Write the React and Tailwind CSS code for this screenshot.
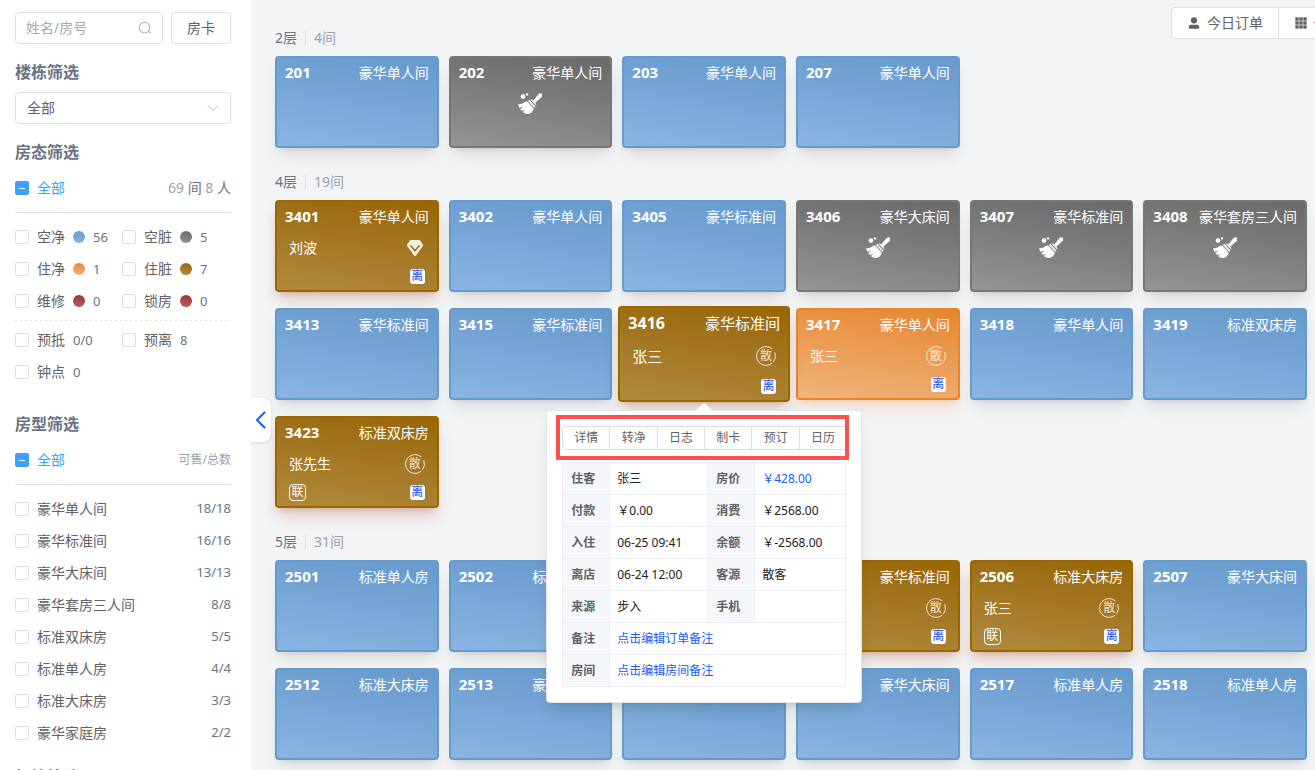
import React, { useState } from "react";
import clsx from "clsx";

const STATUS_FILTERS = [
  { label: "空净", count: "56", dot: "bg-linear-190 from-[#6699cc] to-[#8ab4e2]" },
  { label: "空脏", count: "5", dot: "bg-linear-190 from-[#696969] to-[#949494]" },
  { label: "住净", count: "1", dot: "bg-linear-190 from-[#e6862c] to-[#f0b47a]" },
  { label: "住脏", count: "7", dot: "bg-linear-190 from-[#996600] to-[#b08a3c]" },
  { label: "维修", count: "0", dot: "bg-linear-190 from-[#993333] to-[#b86060]" },
  { label: "锁房", count: "0", dot: "bg-linear-190 from-[#993333] to-[#b86060]" },
];

const ORDER_FILTERS = [
  { label: "预抵", count: "0/0" },
  { label: "预离", count: "8" },
  { label: "钟点", count: "0" },
];

const ROOM_TYPES = [
  ["豪华单人间", "18/18"],
  ["豪华标准间", "16/16"],
  ["豪华大床间", "13/13"],
  ["豪华套房三人间", "8/8"],
  ["标准双床房", "5/5"],
  ["标准单人房", "4/4"],
  ["标准大床房", "3/3"],
  ["豪华家庭房", "2/2"],
];

const FLOORS = [
  {
    name: "2层",
    total: "4间",
    rooms: [
      { no: "201", type: "豪华单人间", status: "clean" },
      { no: "202", type: "豪华单人间", status: "dirty" },
      { no: "203", type: "豪华单人间", status: "clean" },
      { no: "207", type: "豪华单人间", status: "clean" },
    ],
  },
  {
    name: "4层",
    total: "19间",
    rooms: [
      { no: "3401", type: "豪华单人间", status: "usedDirty", guest: "刘波", vip: true, leaving: true },
      { no: "3402", type: "豪华单人间", status: "clean" },
      { no: "3405", type: "豪华标准间", status: "clean" },
      { no: "3406", type: "豪华大床间", status: "dirty" },
      { no: "3407", type: "豪华标准间", status: "dirty" },
      { no: "3408", type: "豪华套房三人间", status: "dirty" },
      { no: "3413", type: "豪华标准间", status: "clean" },
      { no: "3415", type: "豪华标准间", status: "clean" },
      { no: "3416", type: "豪华标准间", status: "usedDirty", guest: "张三", leaving: true, active: true },
      { no: "3417", type: "豪华单人间", status: "used", guest: "张三", leaving: true },
      { no: "3418", type: "豪华单人间", status: "clean" },
      { no: "3419", type: "标准双床房", status: "clean" },
      { no: "3423", type: "标准双床房", status: "usedDirty", guest: "张先生", linked: true, leaving: true },
    ],
  },
  {
    name: "5层",
    total: "31间",
    rooms: [
      { no: "2501", type: "标准单人房", status: "clean" },
      { no: "2502", type: "标准单人房", status: "clean" },
      { no: "2503", type: "豪华标准间", status: "clean" },
      { no: "2505", type: "豪华标准间", status: "usedDirty", guest: "张三", leaving: true },
      { no: "2506", type: "标准大床房", status: "usedDirty", guest: "张三", linked: true, leaving: true },
      { no: "2507", type: "豪华大床间", status: "clean" },
      { no: "2512", type: "标准大床房", status: "clean" },
      { no: "2513", type: "豪华大床间", status: "clean" },
      { no: "2515", type: "豪华标准间", status: "clean" },
      { no: "2516", type: "豪华大床间", status: "clean" },
      { no: "2517", type: "标准单人房", status: "clean" },
      { no: "2518", type: "标准单人房", status: "clean" },
    ],
  },
];

const STATUS_STYLE = {
  clean: "border-[#6699cc] from-[#6699cc] to-[#8ab4e2] shadow-black/10",
  dirty: "border-[#777777] from-[#696969] to-[#949494] shadow-black/10",
  used: "border-[#e6862c] from-[#e6862c] to-[#f0b47a] shadow-[#e6862c]/25",
  usedDirty: "border-[#996600] from-[#996600] to-[#b08a3c] shadow-[#993300]/25",
};

const ACTIONS = ["详情", "转净", "日志", "制卡", "预订", "日历"];

const DETAILS = [
  ["住客", "张三", "房价", "￥428.00"],
  ["付款", "￥0.00", "消费", "￥2568.00"],
  ["入住", "06-25 09:41", "余额", "￥-2568.00"],
  ["离店", "06-24 12:00", "客源", "散客"],
  ["来源", "步入", "手机", ""],
];

function SearchIcon() {
  return (
    <svg className="w-3.5 h-3.5 shrink-0 text-[#a8abb2]" viewBox="0 0 1024 1024" fill="currentColor">
      <path d="m795.904 750.72 124.768 124.768a32 32 0 0 1-45.248 45.248L750.656 795.904a416 416 0 1 1 45.248-45.248zM480 832a352 352 0 1 0 0-704 352 352 0 0 0 0 704z" />
    </svg>
  );
}

function UserIcon() {
  return (
    <svg className="w-3.5 h-3.5 shrink-0" viewBox="0 0 1024 1024" fill="currentColor">
      <path d="M288 320a224 224 0 1 0 448 0 224 224 0 1 0-448 0zm544 608H160a32 32 0 0 1-32-32v-96a160 160 0 0 1 160-160h448a160 160 0 0 1 160 160v96a32 32 0 0 1-32 32z" />
    </svg>
  );
}

function GridIcon() {
  return (
    <svg className="w-3.5 h-3.5 shrink-0" viewBox="0 0 14 14" fill="currentColor">
      {[1, 5, 9].map((y) => [1, 5, 9].map((x) => <rect key={`${x}-${y}`} x={x + 0.3} y={y + 0.3} width="3.4" height="3.4" />))}
    </svg>
  );
}

function BroomIcon() {
  return (
    <svg className="w-6 h-6" viewBox="0 0 24 24" fill="white">
      <circle cx="5" cy="4.6" r="2.3" />
      <circle cx="9" cy="2.4" r="1.2" />
      <path d="M15.2 8.6 20.6 2.1C21.6 1 23 .9 23.9 1.8s.8 2.3-.3 3.3l-6.4 5.6z" />
      <path d="M11.2 7.8 17.4 14.6 16.3 15.8 10 8.9z" />
      <path d="M12.4 7.6 14 7.4 18.2 11.7 18.1 13.6z" />
      <path d="M9.3 9.6 15.6 16.5C15.4 19.2 13.2 21.8 10 21.9 8.2 22 6.3 21.1 4.9 19.9L7 17.9 3.6 18.8 2.3 17.2 5.2 14.9 1.3 15.8 0 12.2C2.5 12.5 4.6 11.8 6 10.6 7 9.7 8.2 9.3 9.3 9.6z" />
    </svg>
  );
}

function DiamondIcon() {
  return (
    <svg className="w-5 h-5" viewBox="0 0 20 20">
      <path d="M6 2h8q.8 0 1.2.6L18 6.8q.3.5 0 1L11 17.6q-1 1.2-2 0L2 7.800q-.3-.5 0-1l2.800-4.200Q5.200 2 6 2z" fill="white" fillOpacity=".88" />
      <path d="M5.800 7.800 10 12.800l4.200-5" fill="none" stroke="#a17416" strokeWidth="1.600" strokeLinecap="round" strokeLinejoin="round" />
    </svg>
  );
}

function WalkInMark() {
  return (
    <span className="relative flex w-5 h-5 items-center justify-center text-xs leading-5 text-white/80">
      <svg className="absolute inset-0 w-5 h-5" viewBox="0 0 20 20" fill="none" stroke="currentColor" strokeWidth="1" strokeLinecap="round">
        <path d="M16 2.600A9.500 9.500 0 1 0 16 17.400M18.900 6.600a9.500 9.500 0 0 1-1.200 9" />
      </svg>
      散
    </span>
  );
}

function Checkbox({ label, indeterminate, children }) {
  const [checked, setChecked] = useState(false);

  return (
    <label className="flex h-8 items-center gap-2 text-sm text-[#606266]">
      <input
        type="checkbox"
        checked={checked}
        onChange={(e) => setChecked(e.target.checked)}
        ref={(el) => {
          if (el) el.indeterminate = !!indeterminate;
        }}
        className="flex w-3.5 h-3.5 shrink-0 appearance-none items-center justify-center rounded-xs border border-[#dcdfe6] bg-white checked:bg-[#409eff] indeterminate:border-[#409eff] indeterminate:bg-[#409eff] indeterminate:before:block indeterminate:before:h-px indeterminate:before:w-1.5 indeterminate:before:bg-white"
      />
      <span className={clsx(indeterminate && "text-[#409eff]")}>{label}</span>
      {children}
    </label>
  );
}

function Sidebar() {
  return (
    <aside className="w-[251px] shrink-0 overflow-hidden bg-white pt-3 pr-5 pl-[15px]">
      <div className="flex gap-2">
        <div className="flex h-8 min-w-0 flex-1 items-center rounded border border-[#dcdfe6] px-2.5">
          <input
            type="text"
            aria-label="姓名/房号"
            placeholder="姓名/房号"
            className="min-w-0 flex-1 text-sm text-[#606266] outline-none placeholder:text-[#a8abb2]"
          />
          <SearchIcon />
        </div>
        <button className="h-8 w-[60px] rounded border border-[#dcdfe6] text-sm text-[#606266]">房卡</button>
      </div>

      <h3 className="mt-4 text-base font-bold text-gray-500">楼栋筛选</h3>
      <div className="relative mt-2">
        <select aria-label="楼栋筛选" className="h-8 w-full appearance-none rounded border border-[#dcdfe6] bg-white px-[11px] text-sm text-[#606266]">
          <option>全部</option>
        </select>
        <svg className="pointer-events-none absolute top-2 right-2.5 w-4 h-4 text-[#b4b8bf]" viewBox="0 0 16 16" fill="none" stroke="currentColor">
          <path d="m3 5.5 5 5 5-5" />
        </svg>
      </div>

      {/* Room status */}
      <h3 className="mt-4 text-base font-bold text-gray-500">房态筛选</h3>
      <div className="mt-2 flex items-center justify-between border-b border-[#dcdfe6] pb-2">
        <Checkbox label="全部" indeterminate />
        <span className="text-sm text-gray-500">
          <span className="text-gray-400">69</span> 间 <span className="text-gray-400">8</span> 人
        </span>
      </div>
      <div className="mt-2 grid grid-cols-[107px_1fr]">
        {STATUS_FILTERS.map((item) => (
          <Checkbox key={item.label} label={item.label}>
            <span className={clsx("w-3 h-3 rounded-full", item.dot)} />
            <span className="text-[13px] text-gray-500">{item.count}</span>
          </Checkbox>
        ))}
      </div>
      <svg className="mt-[3px] block h-px w-full text-[#dcdfe6]">
        <line x1="0" y1="0.5" x2="100%" y2="0.5" stroke="currentColor" strokeDasharray="2 3" />
      </svg>
      <div className="mt-[3px] grid grid-cols-[107px_1fr]">
        {ORDER_FILTERS.map((item) => (
          <Checkbox key={item.label} label={item.label}>
            <span className="text-[13px] text-gray-500">{item.count}</span>
          </Checkbox>
        ))}
      </div>

      {/* Room types */}
      <h3 className="mt-6 text-base font-bold text-gray-500">房型筛选</h3>
      <div className="mt-2 flex items-center justify-between border-b border-[#dcdfe6] pb-2">
        <Checkbox label="全部" indeterminate />
        <span className="text-xs text-gray-400">可售/总数</span>
      </div>
      <ul className="mt-2">
        {ROOM_TYPES.map(([name, count]) => (
          <li key={name} className="flex items-center justify-between">
            <Checkbox label={name} />
            <span className="text-[13px] text-gray-500">{count}</span>
          </li>
        ))}
      </ul>
      <h3 className="mt-4 text-base font-bold text-gray-500">标签筛选</h3>
    </aside>
  );
}

function RoomPopover() {
  return (
    <div className="absolute top-full left-1/2 z-20 mt-2 w-[316px] -translate-x-1/2 rounded border border-[#e4e7ed] bg-white p-[15px] text-xs shadow-lg">
      <span className="absolute -top-1.5 left-1/2 -ml-1.5 w-3 h-3 rotate-45 rounded-xs bg-white" />
      <div className="relative flex">
        {ACTIONS.map((action) => (
          <button
            key={action}
            className="-mr-px h-6 flex-1 border border-[#dcdfe6] bg-white text-[#606266] first:rounded-l last:mr-0 last:rounded-r"
          >
            {action}
          </button>
        ))}
        <span className="pointer-events-none absolute -top-[11px] -right-[3px] -bottom-[10px] -left-[6px] border-4 border-[#ff5050]" />
      </div>
      <table className="mt-3 w-full table-fixed border-collapse text-left text-[#222222]">
        <colgroup>
          <col className="w-[47px]" />
          <col className="w-[98px]" />
          <col className="w-[47px]" />
          <col />
        </colgroup>
        <tbody>
          {DETAILS.map(([k1, v1, k2, v2]) => (
            <tr key={k1} className="h-8">
              <th className="border border-[#ebeef5] bg-[#f5f7fa] px-2 text-[#606266]">{k1}</th>
              <td className="border border-[#ebeef5] px-[7px]">{v1}</td>
              <th className="border border-[#ebeef5] bg-[#f5f7fa] px-2 text-[#606266]">{k2}</th>
              <td className={clsx("border border-[#ebeef5] px-[7px]", k2 === "房价" && "text-blue-600")}>{v2}</td>
            </tr>
          ))}
          <tr className="h-8">
            <th className="border border-[#ebeef5] bg-[#f5f7fa] px-2 text-[#606266]">备注</th>
            <td colSpan={3} className="border border-[#ebeef5] px-[7px]">
              <a href="#order-note" className="text-blue-600">点击编辑订单备注</a>
            </td>
          </tr>
          <tr className="h-8">
            <th className="border border-[#ebeef5] bg-[#f5f7fa] px-2 text-[#606266]">房间</th>
            <td colSpan={3} className="border border-[#ebeef5] px-[7px]">
              <a href="#room-note" className="text-blue-600">点击编辑房间备注</a>
            </td>
          </tr>
        </tbody>
      </table>
    </div>
  );
}

function RoomCard({ room }) {
  return (
    <div className={clsx("relative", room.active ? "z-10 -mx-1 -my-0.5" : "")}>
      <div
        className={clsx(
          "flex flex-col rounded border-2 bg-linear-190 px-2 text-white shadow-lg",
          STATUS_STYLE[room.status],
          room.active ? "h-24 pt-1 text-[15px]" : "h-[92px] pt-1 text-sm"
        )}
      >
        <div className="flex h-[22px] items-center justify-between">
          <b className={room.active ? "text-base" : "text-[15px]"}>{room.no}</b>
          <span>{room.type}</span>
        </div>
        {room.status === "dirty" && (
          <div className="mt-2 flex justify-center">
            <BroomIcon />
          </div>
        )}
        {room.guest && (
          <>
            <div className={clsx("flex h-6 items-center justify-between px-1", room.active ? "mt-2.5" : "mt-2")}>
              <span>{room.guest}</span>
              {room.vip ? <DiamondIcon /> : <WalkInMark />}
            </div>
            <div className={clsx("flex h-5 items-center px-1", room.active ? "mt-2" : "mt-1.5")}>
              {room.linked && (
                <span className="flex w-[17px] h-[17px] items-center justify-center rounded border border-white text-xs leading-4">联</span>
              )}
              {room.leaving && (
                <span className="ml-auto flex w-[15px] h-[15px] items-center justify-center rounded-[3px] bg-white text-xs leading-4 text-blue-700">离</span>
              )}
            </div>
          </>
        )}
      </div>
      {room.active && <RoomPopover />}
    </div>
  );
}

export default function App() {
  return (
    <div className="flex h-screen overflow-hidden font-['Noto_Sans','Noto_Sans_CJK_SC',sans-serif]">
      <Sidebar />
      <main className="relative min-w-0 flex-1 overflow-hidden bg-gray-100 pt-7 pr-2 pl-6">
        <button
          aria-label="收起"
          className="absolute top-[398px] left-0 flex h-11 w-5 items-center justify-center rounded-r-lg bg-white text-blue-600 shadow"
        >
          <svg className="w-3 h-5" viewBox="0 0 12 20" fill="none" stroke="currentColor" strokeWidth="2" strokeLinecap="round" strokeLinejoin="round">
            <path d="M9.5 2.5 2 10l7.5 7.5" />
          </svg>
        </button>

        {/* Toolbar runs past the right edge of the window */}
        <div className="absolute top-[7px] -right-[70px] z-10 flex text-sm text-[#606266]">
          <button className="flex h-8 w-[108px] items-center justify-center gap-1.5 rounded-l border border-[#dcdfe6] bg-white">
            <UserIcon />
            今日订单
          </button>
          <button className="-ml-px flex h-8 w-[107px] items-center justify-center gap-1.5 rounded-r border border-[#dcdfe6] bg-white">
            <GridIcon />
            一键制卡
          </button>
        </div>

        <div className="flex flex-col gap-6">
          {FLOORS.map((floor) => (
            <section key={floor.name}>
              <div className="mb-2 flex h-5 items-center text-sm text-gray-500">
                <span>{floor.name}</span>
                <span className="mx-2 h-3.5 w-px bg-[#dcdfe6]" />
                <span className="text-gray-400">{floor.total}</span>
              </div>
              <div className="grid grid-cols-6 gap-x-2.5 gap-y-4">
                {floor.rooms.map((room) => (
                  <RoomCard key={room.no} room={room} />
                ))}
              </div>
            </section>
          ))}
        </div>
      </main>
    </div>
  );
}
